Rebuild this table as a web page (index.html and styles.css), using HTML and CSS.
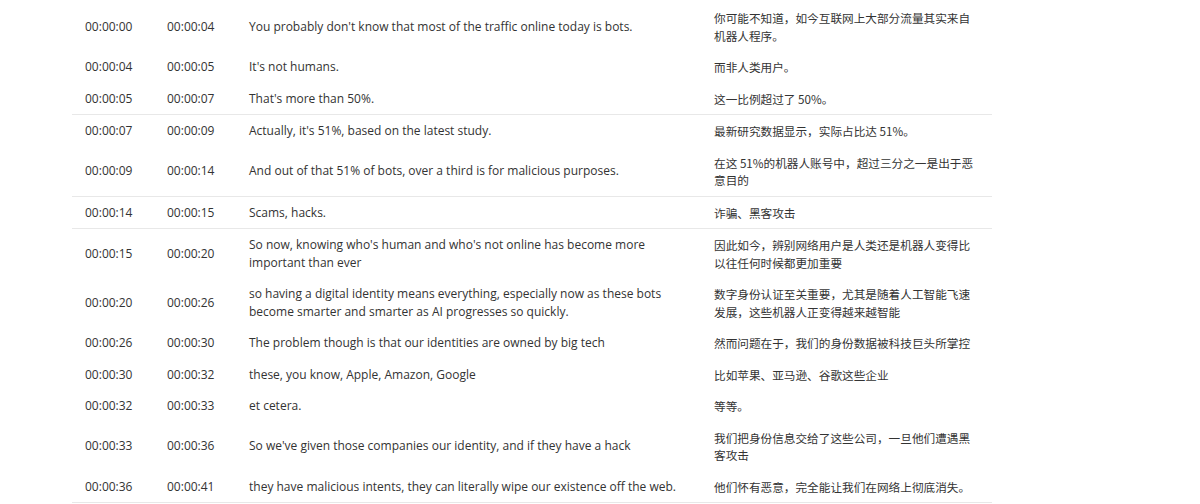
FILE: index.html
```html
<!DOCTYPE html>
<html lang="zh-CN">
<head>
<meta charset="utf-8">
<title>Subtitles</title>
<link rel="stylesheet" href="styles.css">
</head>
<body>
<table class="subs">
  <colgroup>
    <col class="c-start"><col class="c-end"><col class="c-en"><col class="c-zh">
  </colgroup>
  <tbody>
    <tr><td>00:00:00</td><td>00:00:04</td><td>You probably don't know that most of the traffic online today is bots.</td><td class="zh">你可能不知道，如今互联网上大部分流量其实来自机器人程序。</td></tr>
    <tr><td>00:00:04</td><td>00:00:05</td><td>It's not humans.</td><td class="zh">而非人类用户。</td></tr>
    <tr><td>00:00:05</td><td>00:00:07</td><td>That's more than 50%.</td><td class="zh">这一比例超过了 50%。</td></tr>
    <tr class="sep"><td>00:00:07</td><td>00:00:09</td><td>Actually, it's 51%, based on the latest study.</td><td class="zh">最新研究数据显示，实际占比达 51%。</td></tr>
    <tr><td>00:00:09</td><td>00:00:14</td><td>And out of that 51% of bots, over a third is for malicious purposes.</td><td class="zh">在这 51%的机器人账号中，超过三分之一是出于恶意目的</td></tr>
    <tr class="sep"><td>00:00:14</td><td>00:00:15</td><td>Scams, hacks.</td><td class="zh">诈骗、黑客攻击</td></tr>
    <tr class="sep"><td>00:00:15</td><td>00:00:20</td><td>So now, knowing who's human and who's not online has become more important than ever</td><td class="zh">因此如今，辨别网络用户是人类还是机器人变得比以往任何时候都更加重要</td></tr>
    <tr><td>00:00:20</td><td>00:00:26</td><td>so having a digital identity means everything, especially now as these bots become smarter and smarter as AI progresses so quickly.</td><td class="zh">数字身份认证至关重要，尤其是随着人工智能飞速发展，这些机器人正变得越来越智能</td></tr>
    <tr><td>00:00:26</td><td>00:00:30</td><td>The problem though is that our identities are owned by big tech</td><td class="zh">然而问题在于，我们的身份数据被科技巨头所掌控</td></tr>
    <tr><td>00:00:30</td><td>00:00:32</td><td>these, you know, Apple, Amazon, Google</td><td class="zh">比如苹果、亚马逊、谷歌这些企业</td></tr>
    <tr><td>00:00:32</td><td>00:00:33</td><td>et cetera.</td><td class="zh">等等。</td></tr>
    <tr><td>00:00:33</td><td>00:00:36</td><td>So we've given those companies our identity, and if they have a hack</td><td class="zh">我们把身份信息交给了这些公司，一旦他们遭遇黑客攻击</td></tr>
    <tr class="last"><td>00:00:36</td><td>00:00:41</td><td>they have malicious intents, they can literally wipe our existence off the web.</td><td class="zh">他们怀有恶意，完全能让我们在网络上彻底消失。</td></tr>
  </tbody>
</table>
</body>
</html>
```

FILE: styles.css
```css
html, body {
  margin: 0;
  padding: 0;
  background: #ffffff;
}

body {
  font-family: "Open Sans", "Noto Sans CJK SC", sans-serif;
  font-size: 12px;
  color: #333333;
}

.subs {
  margin: 2px 0 0 72px;
  width: 920px;
  border-collapse: collapse;
  table-layout: fixed;
}

.c-start { width: 82px; }
.c-end { width: 82px; }
.c-en { width: 465px; }
.c-zh { width: 291px; }

.subs td {
  padding: 7px 13px;
  line-height: 17.5px;
  vertical-align: middle;
}

.subs td.zh {
  font-family: "Noto Sans CJK SC", sans-serif;
  font-size: 11.65px;
}

.subs tr.sep td {
  border-top: 1px solid #e8e8e8;
}

.subs tr.last td {
  border-bottom: 1px solid #e8e8e8;
}
```
